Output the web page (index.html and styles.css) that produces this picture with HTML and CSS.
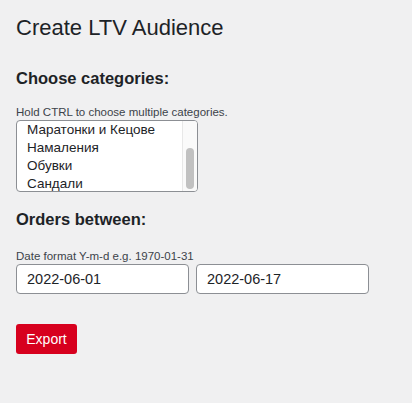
FILE: index.html
```html
<!DOCTYPE html>
<html lang="bg">
<head>
<meta charset="utf-8">
<title>Create LTV Audience</title>
<link rel="stylesheet" href="styles.css">
</head>
<body>
<div class="wrap">
  <h1 class="title">Create LTV Audience</h1>
  <h2 class="section">Choose categories:</h2>
  <p class="hint">Hold CTRL to choose multiple categories.</p>
  <div class="listbox">
    <div class="options">
      <div class="option">Маратонки и Кецове</div>
      <div class="option">Намаления</div>
      <div class="option">Обувки</div>
      <div class="option">Сандали</div>
    </div>
    <div class="scrolltrack"><div class="thumb"></div></div>
  </div>
  <h2 class="section section-orders">Orders between:</h2>
  <p class="hint hint-date">Date format Y-m-d e.g. 1970-01-31</p>
  <div class="dates">
    <input class="date" type="text" value="2022-06-01">
    <input class="date" type="text" value="2022-06-17">
  </div>
  <button class="export" type="button">Export</button>
</div>
</body>
</html>
```

FILE: styles.css
```css
html, body {
  margin: 0;
  padding: 0;
  background: #f0f0f1;
  font-family: "Liberation Sans", Arial, sans-serif;
  color: #1d2327;
}
.wrap {
  padding: 13px 16px 0 16px;
}
.title {
  font-size: 22px;
  font-weight: 400;
  line-height: 30px;
  margin: 0;
}
.section {
  font-size: 16.5px;
  font-weight: 700;
  line-height: 22px;
  margin: 24px 0 0 0;
}
.section-orders {
  margin-top: 16px;
}
.hint {
  font-size: 11.5px;
  line-height: 14px;
  margin: 16px 0 1px 0;
  color: #3c434a;
}
.hint-date {
  margin-top: 19px;
}
.listbox {
  position: relative;
  width: 180px;
  height: 70px;
  border: 1px solid #8c8f94;
  border-radius: 4px;
  background: #fff;
  overflow: hidden;
}
.options {
  padding: 0 0 0 10px;
}
.option {
  font-size: 13.5px;
  line-height: 18px;
  color: #1d2327;
  white-space: nowrap;
}
.scrolltrack {
  position: absolute;
  top: 0;
  right: 0;
  width: 14px;
  height: 100%;
  background: #fafafa;
  border-left: 1px solid #e8e8e8;
}
.thumb {
  position: absolute;
  left: 3px;
  top: 27px;
  width: 8px;
  height: 41px;
  border-radius: 4px;
  background: #c1c1c1;
}
.dates {
  display: flex;
  gap: 7px;
}
.date {
  width: 173px;
  height: 30px;
  box-sizing: border-box;
  border: 1px solid #8c8f94;
  border-radius: 4px;
  background: #fff;
  padding: 0 10px;
  font-family: "Liberation Sans", Arial, sans-serif;
  font-size: 14.5px;
  color: #1d2327;
  margin: 0;
}
.export {
  display: block;
  margin: 30px 0 0 0;
  width: 61px;
  height: 30px;
  border: none;
  border-radius: 3px;
  background: #d7001e;
  color: #fff;
  font-family: "Liberation Sans", Arial, sans-serif;
  font-size: 14px;
  padding: 0;
}
```
